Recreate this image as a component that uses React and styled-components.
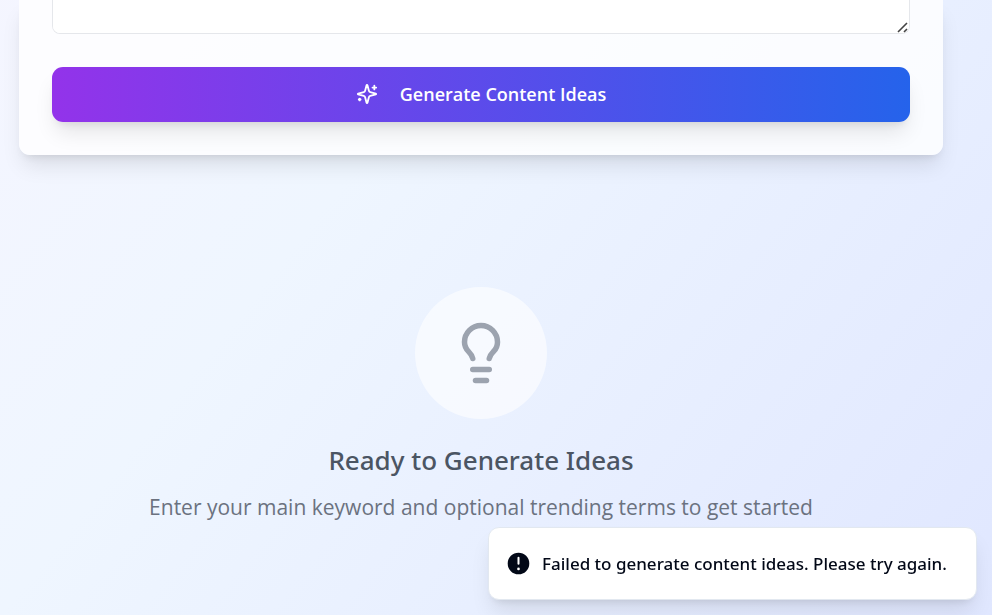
import React from "react";
import styled, { createGlobalStyle } from "styled-components";
import { Lightbulb } from "lucide-react";

const bodyFont = `"Segoe UI", "Open Sans", "Noto Sans", sans-serif`;
const mediumFont = `"Segoe UI", "Noto Sans", "Open Sans", sans-serif`;

const GlobalStyle = createGlobalStyle`
  *, *::before, *::after { box-sizing: border-box; }
  body {
    margin: 0;
    font-family: ${bodyFont};
  }
`;

const Page = styled.div`
  min-height: 100vh;
  padding: 0 49px 0 19px;
  background: linear-gradient(to bottom right, #faf5ff, #eff6ff, #e0e7ff) bottom / 100% 1250px;
`;

const Card = styled.form`
  display: flex;
  flex-direction: column;
  gap: 33px;
  padding: 0 33px 33px;
  border-radius: 0 0 11px 11px;
  background: rgba(255, 255, 255, 0.8);
  box-shadow: 0 14px 21px -4px rgba(0, 0, 0, 0.1), 0 6px 8px -5px rgba(0, 0, 0, 0.1);
`;

const KeywordsField = styled.textarea`
  display: block;
  width: 100%;
  height: 34px;
  padding: 0 16px 10px;
  border: 1px solid #e5e7eb;
  border-top: 0;
  border-radius: 0 0 8px 8px;
  outline: none;
  background: #ffffff;
  font: inherit;
  font-size: 18px;
  resize: vertical;

  &::-webkit-resizer {
    background: url("data:image/svg+xml,%3Csvg xmlns='http://www.w3.org/2000/svg' width='15' height='15' fill='none' stroke='%23444' stroke-width='1.6'%3E%3Cpath d='M4 14 13 5M10 14l3-3'/%3E%3C/svg%3E") no-repeat bottom right;
  }
`;

const GenerateButton = styled.button`
  display: flex;
  align-items: center;
  justify-content: center;
  gap: 22px;
  height: 55px;
  padding: 0 16px 2px;
  border: 0;
  border-radius: 11px;
  background: linear-gradient(to right, #9333ea, #2563eb);
  box-shadow: 0 14px 21px -4px rgba(0, 0, 0, 0.1), 0 6px 8px -5px rgba(0, 0, 0, 0.1);
  color: #ffffff;
  font: inherit;
  font-size: 18px;
  font-weight: 600;
  cursor: pointer;
`;

const SparklesIcon = styled.svg`
  flex: none;
  width: 22px;
  height: 22px;
  fill: none;
  stroke: currentColor;
  stroke-width: 2;
  stroke-linecap: round;
  stroke-linejoin: round;
`;

const EmptyState = styled.section`
  display: flex;
  flex-direction: column;
  align-items: center;
  padding: 132px 0 88px;
  text-align: center;
`;

const IconDisc = styled.div`
  display: grid;
  place-items: center;
  width: 132px;
  height: 132px;
  margin-bottom: 22px;
  border-radius: 50%;
  background: rgba(255, 255, 255, 0.6);
  color: #9ca3af;
`;

const Title = styled.h2`
  margin: 0 0 12px;
  color: #4b5563;
  font-family: ${mediumFont};
  font-size: 26px;
  font-weight: 500;
  line-height: 38px;
`;

const Hint = styled.p`
  margin: 0;
  color: #6b7280;
  font-size: 21px;
  line-height: 33px;
`;

const Toast = styled.div`
  position: fixed;
  right: 15px;
  bottom: 15px;
  display: flex;
  align-items: center;
  gap: 10px;
  width: 489px;
  max-width: calc(100% - 30px);
  min-height: 73px;
  padding: 16px 16px;
  border: 1px solid #e2e8f0;
  border-radius: 11px;
  background: #ffffff;
  box-shadow: 0 14px 21px -4px rgba(0, 0, 0, 0.1), 0 6px 8px -5px rgba(0, 0, 0, 0.1);
  color: #020817;
  font-family: ${mediumFont};
  font-size: 17px;
  font-weight: 500;
  line-height: 26px;
`;

const ToastIcon = styled.svg`
  flex: none;
  width: 27px;
  height: 27px;
`;

export default function App() {
  return (
    <>
      <GlobalStyle />
      <Page>
        <Card onSubmit={(event) => event.preventDefault()}>
          <KeywordsField aria-label="Trending terms" />
          <GenerateButton type="submit">
            <SparklesIcon viewBox="0 0 24 24" aria-hidden="true">
              <path d="M9.937 15.5A2 2 0 0 0 8.5 14.063l-6.135-1.582a.5.5 0 0 1 0-.962L8.5 9.936A2 2 0 0 0 9.937 8.5l1.582-6.135a.5.5 0 0 1 .963 0L14.063 8.5A2 2 0 0 0 15.5 9.937l6.135 1.581a.5.5 0 0 1 0 .964L15.5 14.063a2 2 0 0 0-1.437 1.437l-1.582 6.135a.5.5 0 0 1-.963 0z" />
              <path d="M20 3v4" />
              <path d="M22 5h-4" />
              <path d="M4 17v2" />
              <path d="M5 18H3" />
            </SparklesIcon>
            Generate Content Ideas
          </GenerateButton>
        </Card>
        <EmptyState>
          <IconDisc>
            <Lightbulb size={66} aria-hidden="true" />
          </IconDisc>
          <Title>Ready to Generate Ideas</Title>
          <Hint>Enter your main keyword and optional trending terms to get started</Hint>
        </EmptyState>
      </Page>
      <Toast role="status">
        <ToastIcon viewBox="0 0 20 20" fill="currentColor" aria-hidden="true">
          <path
            fillRule="evenodd"
            clipRule="evenodd"
            d="M18 10a8 8 0 11-16 0 8 8 0 0116 0zm-8-5a.75.75 0 01.75.75v4.5a.75.75 0 01-1.5 0v-4.5A.75.75 0 0110 5zm0 10a1 1 0 100-2 1 1 0 000 2z"
          />
        </ToastIcon>
        <span>Failed to generate content ideas. Please try again.</span>
      </Toast>
    </>
  );
}
